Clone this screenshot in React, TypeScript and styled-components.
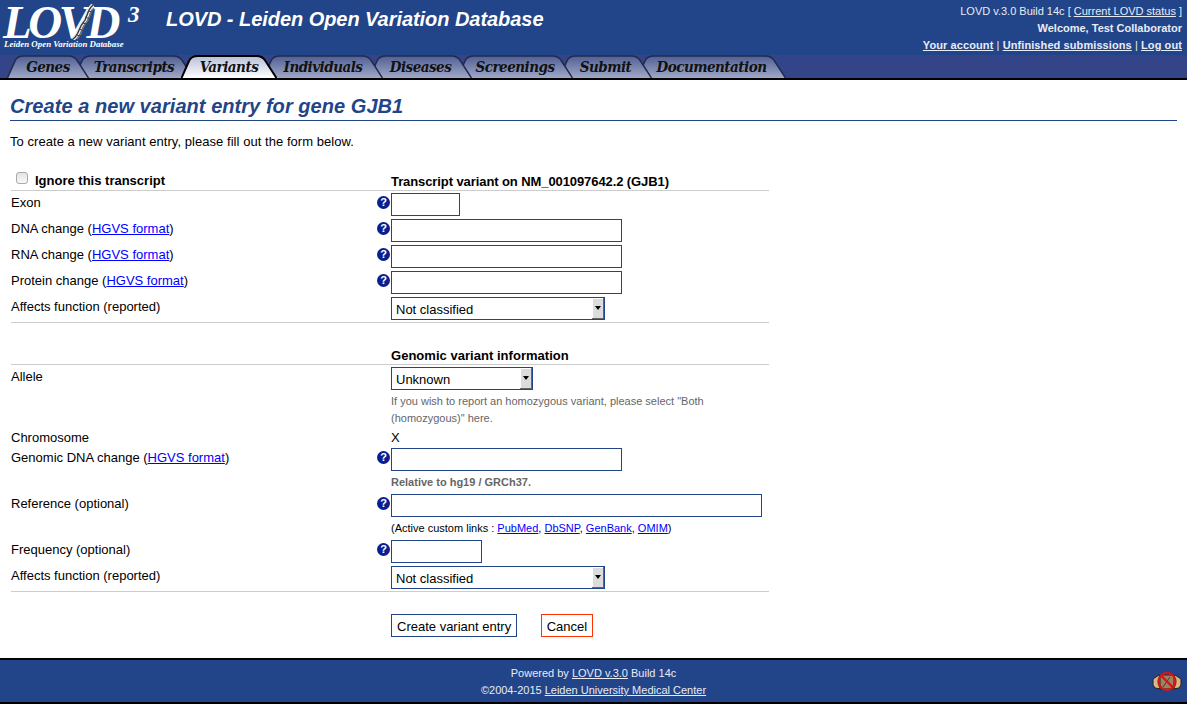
import React from "react";
import styled, { createGlobalStyle } from "styled-components";

const BLUE = "#224488";

const tabs = [
  { label: "Genes", width: 82, overlap: 0 },
  { label: "Transcripts", width: 120, overlap: 15 },
  { label: "Variants", width: 96, overlap: 13, active: true },
  { label: "Individuals", width: 120, overlap: 14 },
  { label: "Diseases", width: 103, overlap: 14 },
  { label: "Screenings", width: 116, overlap: 15 },
  { label: "Submit", width: 93, overlap: 14 },
  { label: "Documentation", width: 149, overlap: 15 },
];

const TabShape = ({ width, active }: { width: number; active?: boolean }) => {
  const id = active ? "tabOn" : "tabOff";
  const r = width - 0.5;
  const d = `M0.5 23 L8 6 Q10 1 17 1 L${r - 20} 1 Q${r - 14} 1 ${r - 11} 6 L${r} 23`;
  return (
    <TabSvg width={width} height={23} viewBox={`0 0 ${width} 23`}>
      <defs>
        <linearGradient id={id} x1="0" y1="0" x2="0" y2="1">
          <stop offset="0" stopColor={active ? "#b8bfd6" : "#505f94"} />
          <stop offset="1" stopColor={active ? "#ffffff" : "#a0a8c7"} />
        </linearGradient>
      </defs>
      <path d={`${d} Z`} fill={`url(#${id})`} />
      <path d={d} fill="none" stroke={active ? "#000" : "#222b4d"} strokeWidth={active ? 2 : 1.5} />
    </TabSvg>
  );
};

const HelpIcon = () => <HelpBadge>?</HelpBadge>;

const Select = ({ value, width }: { value: string; width: number }) => (
  <SelectBox $width={width}>
    <SelectValue>{value}</SelectValue>
    <SelectArrow />
  </SelectBox>
);

const FormRow = ({
  label,
  help,
  height = 26,
  children,
}: {
  label?: React.ReactNode;
  help?: boolean;
  height?: number;
  children?: React.ReactNode;
}) => (
  <Row $height={height}>
    <RowLabel>{label}</RowLabel>
    <RowHelp>{help && <HelpIcon />}</RowHelp>
    <RowField>{children}</RowField>
  </Row>
);

const Hgvs = ({ text }: { text: string }) => (
  <>
    {text} (<a href="#hgvs">HGVS format</a>)
  </>
);

const App = () => {
  return (
    <Page>
      <GlobalStyle />
      <Header>
        <Logo>
          <LogoWord>LOVD</LogoWord>
          <Helix viewBox="0 0 24 36" width="24" height="36">
            <path d="M2 35 C9 30 7 24 12 19 C17 14 15 7 22 1" fill="none" stroke="#e8e8e8" strokeWidth="4" />
            <path d="M2 35 C9 30 7 24 12 19 C17 14 15 7 22 1" fill="none" stroke="#333" strokeWidth="1.3" />
            <path d="M6 35 C12 30 10 24 15 19 C20 14 18 8 23 4" fill="none" stroke="#777" strokeWidth="1.3" />
            <path d="M5 31 L10 32 M8 25 L13 27 M11 19 L16 20 M14 13 L19 15 M17 7 L22 8" stroke="#444" strokeWidth="1" />
          </Helix>
          <LogoThree>3</LogoThree>
          <LogoTag>Leiden Open Variation Database</LogoTag>
        </Logo>
        <SiteTitle>LOVD - Leiden Open Variation Database</SiteTitle>
        <UserBox>
          <div>
            LOVD v.3.0 Build 14c [ <a href="#status">Current LOVD status</a> ]
          </div>
          <b>Welcome, Test Collaborator</b>
          <UserLinks>
            <a href="#account">Your account</a> <Pipe>|</Pipe> <a href="#unfinished">Unfinished submissions</a>{" "}
            <Pipe>|</Pipe> <a href="#logout">Log out</a>
          </UserLinks>
        </UserBox>
      </Header>
      <TabBar>
        {tabs.map((t, i) => (
          <Tab key={t.label} $width={t.width} $overlap={t.overlap} $layer={t.active ? 20 : 10 - i}>
            <TabShape width={t.width} active={t.active} />
            <TabLabel>{t.label}</TabLabel>
          </Tab>
        ))}
      </TabBar>
      <Content>
        <PageTitle>Create a new variant entry for gene GJB1</PageTitle>
        <Intro>To create a new variant entry, please fill out the form below.</Intro>
        <Form>
          <HeadRow $height={30}>
            <RowLabel>
              <IgnoreLabel>
                <input type="checkbox" />
                <b>Ignore this transcript</b>
              </IgnoreLabel>
            </RowLabel>
            <RowHelp />
            <RowField>
              <ColumnTitle $tight>Transcript variant on NM_001097642.2 (GJB1)</ColumnTitle>
            </RowField>
          </HeadRow>
          <Spacer $height={2} />
          <FormRow label="Exon" help>
            <TextInput $width={69} />
          </FormRow>
          <FormRow label={<Hgvs text="DNA change" />} help>
            <TextInput $width={231} />
          </FormRow>
          <FormRow label={<Hgvs text="RNA change" />} help>
            <TextInput $width={231} />
          </FormRow>
          <FormRow label={<Hgvs text="Protein change" />} help>
            <TextInput $width={231} />
          </FormRow>
          <FormRow label="Affects function (reported)" height={25}>
            <Select value="Not classified" width={214} />
          </FormRow>
          <SectionEnd />
          <Spacer $height={25} />
          <HeadRow $height={20}>
            <RowLabel />
            <RowHelp />
            <RowField>
              <ColumnTitle>Genomic variant information</ColumnTitle>
            </RowField>
          </HeadRow>
          <Spacer $height={2} />
          <FormRow label="Allele">
            <Select value="Unknown" width={142} />
          </FormRow>
          <HelpText>
            If you wish to report an homozygous variant, please select "Both (homozygous)" here.
          </HelpText>
          <PlainRow>
            <RowLabel>Chromosome</RowLabel>
            <RowHelp />
            <PlainValue>X</PlainValue>
          </PlainRow>
          <FormRow label={<Hgvs text="Genomic DNA change" />} help>
            <TextInput $width={231} />
          </FormRow>
          <NoteRow>
            <b>Relative to hg19 / GRCh37.</b>
          </NoteRow>
          <FormRow label="Reference (optional)" help>
            <TextInput $width={371} />
          </FormRow>
          <LinksRow>
            (Active custom links : <a href="#pubmed">PubMed</a>, <a href="#dbsnp">DbSNP</a>,{" "}
            <a href="#genbank">GenBank</a>, <a href="#omim">OMIM</a>)
          </LinksRow>
          <FormRow label="Frequency (optional)" help>
            <TextInput $width={91} />
          </FormRow>
          <FormRow label="Affects function (reported)" height={25}>
            <Select value="Not classified" width={214} />
          </FormRow>
          <SectionEnd />
          <Buttons>
            <Button type="button">Create variant entry</Button>
            <Button type="button" $danger>
              Cancel
            </Button>
          </Buttons>
        </Form>
      </Content>
      <Footer>
        <FooterText>
          <div>
            Powered by <a href="#lovd">LOVD v.3.0</a> Build 14c
          </div>
          <div>
            ©2004-2015 <a href="#lumc">Leiden University Medical Center</a>
          </div>
        </FooterText>
        <FooterIcon viewBox="0 0 30 21" width="30" height="21">
          <path d="M1 8 L7 4 L9 8 L7 15 L9 18 L3 17 L1 14 Z" fill="#d8b888" stroke="#222" />
          <path d="M29 8 L23 4 L21 8 L23 15 L21 18 L27 17 L29 14 Z" fill="#d8b888" stroke="#222" />
          <rect x="8" y="4" width="14" height="14" fill="#9c8462" stroke="#222" />
          <path d="M18 6 L11 16" stroke="#4a3e2e" strokeWidth="1" />
          <circle cx="15" cy="10.5" r="8.5" fill="none" stroke="#d01818" strokeWidth="2.4" />
          <path d="M9 4.5 L21 16.5" stroke="#d01818" strokeWidth="2.4" />
        </FooterIcon>
      </Footer>
    </Page>
  );
};

export default App;

const GlobalStyle = createGlobalStyle`
  html, body {
    margin: 0;
    padding: 0;
    background: #fff;
  }
  body {
    font-family: "Liberation Sans", Arial, sans-serif;
    font-size: 13px;
    color: #000;
  }
  a {
    color: #0000ff;
  }
`;

const Page = styled.div`
  height: 704px;
  display: flex;
  flex-direction: column;
  overflow: hidden;
`;

const Header = styled.header`
  height: 55px;
  background: ${BLUE};
  display: flex;
  align-items: flex-start;
  color: #fff;
`;

const Logo = styled.div`
  position: relative;
  width: 166px;
  height: 55px;
  flex: none;
`;

const LogoWord = styled.div`
  position: absolute;
  left: 3px;
  top: 5px;
  font: italic bold 47px/35px "Liberation Serif", serif;
  letter-spacing: -3.5px;
  color: #fff;
`;

const Helix = styled.svg`
  position: absolute;
  left: 71px;
  top: 4px;
`;

const LogoThree = styled.div`
  position: absolute;
  left: 128px;
  top: 5px;
  font: italic bold 23px/20px "Liberation Serif", serif;
`;

const LogoTag = styled.div`
  position: absolute;
  left: 4px;
  top: 39px;
  font: italic bold 8.9px/10px "Liberation Serif", serif;
  white-space: nowrap;
`;

const SiteTitle = styled.div`
  flex: 1;
  padding-top: 7px;
  font: italic bold 20px/24px "Liberation Sans", Arial, sans-serif;
  letter-spacing: -0.05px;
  white-space: nowrap;
`;

const UserBox = styled.div`
  padding: 3px 5px 0 0;
  display: flex;
  flex-direction: column;
  align-items: flex-end;
  font-size: 11px;
  line-height: 17px;
  color: #e8ecf6;

  a {
    color: inherit;
  }
`;

const UserLinks = styled.div`
  font-weight: bold;
  letter-spacing: 0.09px;
`;

const Pipe = styled.span`
  font-weight: normal;
`;

const TabBar = styled.nav`
  height: 23px;
  padding-left: 7px;
  background: #334488;
  border-bottom: 2px solid #000;
  display: flex;
  align-items: flex-end;
`;

const Tab = styled.div<{ $width: number; $overlap: number; $layer: number }>`
  position: relative;
  z-index: ${(p) => p.$layer};
  flex: none;
  width: ${(p) => p.$width}px;
  height: 23px;
  margin-left: -${(p) => p.$overlap}px;
  display: flex;
  align-items: center;
  justify-content: center;
`;

const TabSvg = styled.svg`
  position: absolute;
  left: 0;
  top: 0;
`;

const TabLabel = styled.span`
  position: relative;
  font: italic bold 15px/20px "DejaVu Serif Condensed", "DejaVu Serif", serif;
  letter-spacing: -0.5px;
  color: #111;
`;

const Content = styled.main`
  flex: 1;
  padding: 0 10px;
`;

const PageTitle = styled.h2`
  margin: 15px 0 0;
  height: 25px;
  border-bottom: 1px solid ${BLUE};
  font: italic bold 20px/23px "Liberation Sans", Arial, sans-serif;
  letter-spacing: 0.05px;
  color: ${BLUE};
`;

const Intro = styled.p`
  margin: 13px 0 0;
  line-height: 16px;
  letter-spacing: 0.05px;
`;

const Form = styled.form`
  width: 758px;
  margin: 20px 0 0 1px;
`;

const Row = styled.div<{ $height: number }>`
  height: ${(p) => p.$height}px;
  display: grid;
  grid-template-columns: 364px 16px 1fr;
`;

const HeadRow = styled(Row)`
  align-items: end;
  border-bottom: 1px solid #ccc;
  padding-bottom: 1px;
  height: auto;
`;

const ColumnTitle = styled.b<{ $tight?: boolean }>`
  letter-spacing: ${(p) => (p.$tight ? "-0.09px" : "0.03px")};
`;

const RowLabel = styled.div`
  padding-top: 2px;
  line-height: 15px;
`;

const RowHelp = styled.div``;

const RowField = styled.div``;

const PlainValue = styled.div`
  padding-top: 2px;
  line-height: 15px;
`;

const HelpBadge = styled.span`
  display: block;
  width: 13px;
  height: 13px;
  margin: 3px 0 0 2px;
  border-radius: 50%;
  background: #0a1f8f;
  color: #fff;
  font: bold 11px/13px "Liberation Sans", Arial, sans-serif;
  text-align: center;
`;

const IgnoreLabel = styled.label`
  display: flex;
  align-items: center;
  gap: 7px;
  padding-left: 5px;

  input {
    appearance: none;
    box-sizing: border-box;
    margin: 0 0 5px;
    width: 12px;
    height: 12px;
    border: 1px solid #aaa;
    border-radius: 3px;
    background: linear-gradient(#e4e4e4, #f8f8f8);
  }
`;

const TextInput = styled.input.attrs({ type: "text" })<{ $width: number }>`
  display: block;
  box-sizing: border-box;
  width: ${(p) => p.$width}px;
  height: 23px;
  padding: 1px 4px;
  border: 1px solid ${BLUE};
  background: #fff;
  font: 13px "Liberation Sans", Arial, sans-serif;
  outline: none;
`;

const SelectBox = styled.div<{ $width: number }>`
  box-sizing: border-box;
  width: ${(p) => p.$width}px;
  height: 23px;
  padding: 0 0 0 4px;
  border: 1px solid ${BLUE};
  display: flex;
  align-items: center;
  justify-content: space-between;
  background: #fff;
`;

const SelectValue = styled.span`
  padding-top: 2px;
`;

const SelectArrow = styled.i`
  box-sizing: border-box;
  width: 12px;
  height: 21px;
  display: flex;
  align-items: center;
  justify-content: center;
  background: #dcdcdc;
  border-right: 1px solid #666;
  border-bottom: 1px solid #666;
  box-shadow: inset 1px 1px 0 #fff;

  &::after {
    content: "";
    border: 3px solid transparent;
    border-top: 4px solid #000;
    border-bottom: 0;
  }
`;

const SectionEnd = styled.hr`
  margin: 0;
  border: 0;
  border-top: 1px solid #ccc;
`;

const Spacer = styled.div<{ $height: number }>`
  height: ${(p) => p.$height}px;
`;

const HelpText = styled.div`
  width: 330px;
  margin-left: 380px;
  font-size: 11px;
  line-height: 17px;
  color: #666;
`;

const PlainRow = styled.div`
  height: 21px;
  display: grid;
  grid-template-columns: 364px 16px 1fr;
  padding-top: 1px;
  box-sizing: border-box;
`;

const NoteRow = styled.div`
  box-sizing: border-box;
  height: 20px;
  margin-left: 380px;
  padding-top: 1px;
  font-size: 11px;
  line-height: 14px;
  color: #666;
`;

const LinksRow = styled.div`
  height: 20px;
  margin-left: 380px;
  font-size: 11px;
  line-height: 16px;
`;

const Buttons = styled.div`
  margin: 22px 0 0 380px;
  display: flex;
  gap: 24px;
`;

const Button = styled.button<{ $danger?: boolean }>`
  height: 23px;
  padding: 2px ${(p) => (p.$danger ? "4.5px" : "5px")} 0;
  border: 1px solid ${(p) => (p.$danger ? "#ff3300" : BLUE)};
  background: #fff;
  font: 13px "Liberation Sans", Arial, sans-serif;
  color: #000;
`;

const Footer = styled.footer`
  position: relative;
  height: 42px;
  border-top: 2px solid #000;
  border-bottom: 2px solid #000;
  background: ${BLUE};
  color: #e8ecf6;
  font-size: 11px;
`;

const FooterText = styled.div`
  padding-top: 5px;
  text-align: center;
  line-height: 17px;

  a {
    color: inherit;
  }
`;

const FooterIcon = styled.svg`
  position: absolute;
  right: 5px;
  top: 11px;
`;
